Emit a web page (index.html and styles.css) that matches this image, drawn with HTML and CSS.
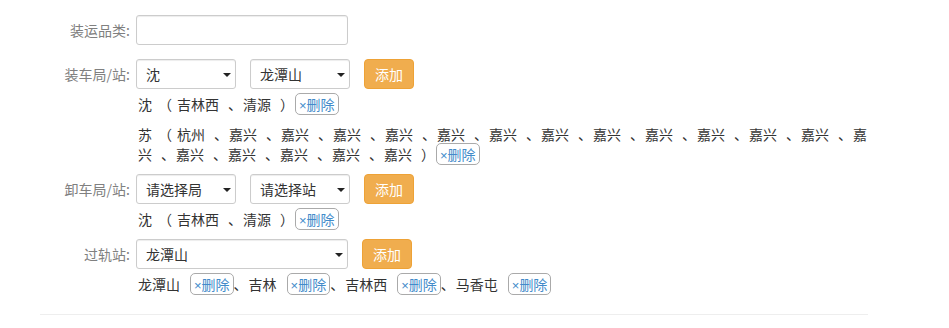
FILE: index.html
```html
<!DOCTYPE html>
<html lang="zh-CN">
<head>
<meta charset="utf-8">
<title>表单</title>
<link rel="stylesheet" href="styles.css">
</head>
<body>
<div class="page">
  <div class="group group-first">
    <div class="lbl">装运品类:</div>
    <div class="ctl">
      <div class="ctrl-row">
        <div class="input w-wide"></div>
      </div>
    </div>
  </div>

  <div class="group">
    <div class="lbl">装车局/站:</div>
    <div class="ctl">
      <div class="ctrl-row">
        <div class="sel w-narrow"><span>沈</span><i class="caret"></i></div>
        <div class="sel w-narrow"><span>龙潭山</span><i class="caret"></i></div>
        <div class="btn">添加</div>
      </div>
      <div class="tags">
        <div class="item"><span class="head">沈</span><span class="open">（</span><span class="st">吉林西</span>、<span class="st">清源</span>）<span class="del"><span class="x">×</span>删除</span></div>
        <div class="item"><span class="head">苏</span><span class="open">（</span><span class="st">杭州</span>、<span class="st">嘉兴</span>、<span class="st">嘉兴</span>、<span class="st">嘉兴</span>、<span class="st">嘉兴</span>、<span class="st">嘉兴</span>、<span class="st">嘉兴</span>、<span class="st">嘉兴</span>、<span class="st">嘉兴</span>、<span class="st">嘉兴</span>、<span class="st">嘉兴</span>、<span class="st">嘉兴</span>、<span class="st">嘉兴</span>、<span class="st">嘉兴</span>、<span class="st">嘉兴</span>、<span class="st">嘉兴</span>、<span class="st">嘉兴</span>、<span class="st">嘉兴</span>、<span class="st">嘉兴</span>）<span class="del"><span class="x">×</span>删除</span></div>
      </div>
    </div>
  </div>

  <div class="group">
    <div class="lbl">卸车局/站:</div>
    <div class="ctl">
      <div class="ctrl-row">
        <div class="sel w-narrow"><span>请选择局</span><i class="caret"></i></div>
        <div class="sel w-narrow"><span>请选择站</span><i class="caret"></i></div>
        <div class="btn">添加</div>
      </div>
      <div class="tags">
        <div class="item"><span class="head">沈</span><span class="open">（</span><span class="st">吉林西</span>、<span class="st">清源</span>）<span class="del"><span class="x">×</span>删除</span></div>
      </div>
    </div>
  </div>

  <div class="group">
    <div class="lbl">过轨站:</div>
    <div class="ctl">
      <div class="ctrl-row">
        <div class="sel w-wide"><span>龙潭山</span><i class="caret"></i></div>
        <div class="btn">添加</div>
      </div>
      <div class="tags">
        <div class="item"><span class="nm">龙潭山</span><span class="del"><span class="x">×</span>删除</span><span class="dun">、</span><span class="nm">吉林</span><span class="del"><span class="x">×</span>删除</span><span class="dun">、</span><span class="nm">吉林西</span><span class="del"><span class="x">×</span>删除</span><span class="dun">、</span><span class="nm">马香屯</span><span class="del"><span class="x">×</span>删除</span></div>
      </div>
    </div>
  </div>

  <div class="rule"></div>
</div>
</body>
</html>
```

FILE: styles.css
```css
html, body {
  margin: 0;
  padding: 0;
  background: #fff;
}

body {
  font-family: "Noto Sans CJK SC", "Noto Sans", sans-serif;
  font-size: 14px;
  color: #333;
}

.page {
  width: 828px;
  padding: 15px 0 0 40px;
}

.group {
  display: flex;
  align-items: flex-start;
}

.group-first {
  margin-bottom: 14px;
}

.lbl {
  flex: 0 0 96px;
  box-sizing: border-box;
  padding-right: 6px;
  text-align: right;
  line-height: 30px;
  height: 30px;
  color: #808080;
  white-space: nowrap;
}

.ctl {
  flex: 1 1 auto;
  min-width: 0;
}

.ctrl-row {
  display: flex;
  gap: 14px;
  height: 30px;
}

.input,
.sel {
  box-sizing: border-box;
  height: 30px;
  border: 1px solid #ccc;
  border-radius: 3px;
  box-shadow: inset 0 1px 1px rgba(0, 0, 0, 0.075);
  background: #fff;
}

.w-wide { width: 212px; }
.w-narrow { width: 100px; }

.sel {
  display: flex;
  align-items: center;
  justify-content: space-between;
  padding: 0 4px 0 9px;
  color: #333;
  white-space: nowrap;
}

.caret {
  width: 0;
  height: 0;
  border-left: 4px solid transparent;
  border-right: 4px solid transparent;
  border-top: 4px solid #222;
  margin-top: 1px;
}

.btn {
  box-sizing: border-box;
  width: 50px;
  height: 30px;
  display: flex;
  align-items: center;
  justify-content: center;
  background: #f0ad4e;
  border: 1px solid #eea236;
  border-radius: 4px;
  color: #fff;
}

.tags {
  margin-top: 5px;
  padding-left: 2px;
}

.item {
  line-height: 20px;
  margin-bottom: 10px;
}

.head {
  padding-right: 6px;
}

.open {
  padding-right: 4px;
}

.st {
  padding: 0 9px 0 1px;
}

.nm {
  margin-right: 10px;
}

.dun {
  padding-right: 1px;
}

.del {
  display: inline-block;
  box-sizing: border-box;
  height: 22px;
  line-height: 20px;
  margin: -1px 0 -1px 1px;
  padding: 0 3px;
  border: 1px solid #aaa;
  border-radius: 5px;
  color: #428bca;
  vertical-align: top;
  white-space: nowrap;
}

.nm + .del {
  margin-left: 0;
}

.x {
  font-family: "Liberation Sans", sans-serif;
  font-size: 13px;
}

.rule {
  height: 0;
  border-top: 1px solid #eee;
  margin-top: 10px;
}
```
